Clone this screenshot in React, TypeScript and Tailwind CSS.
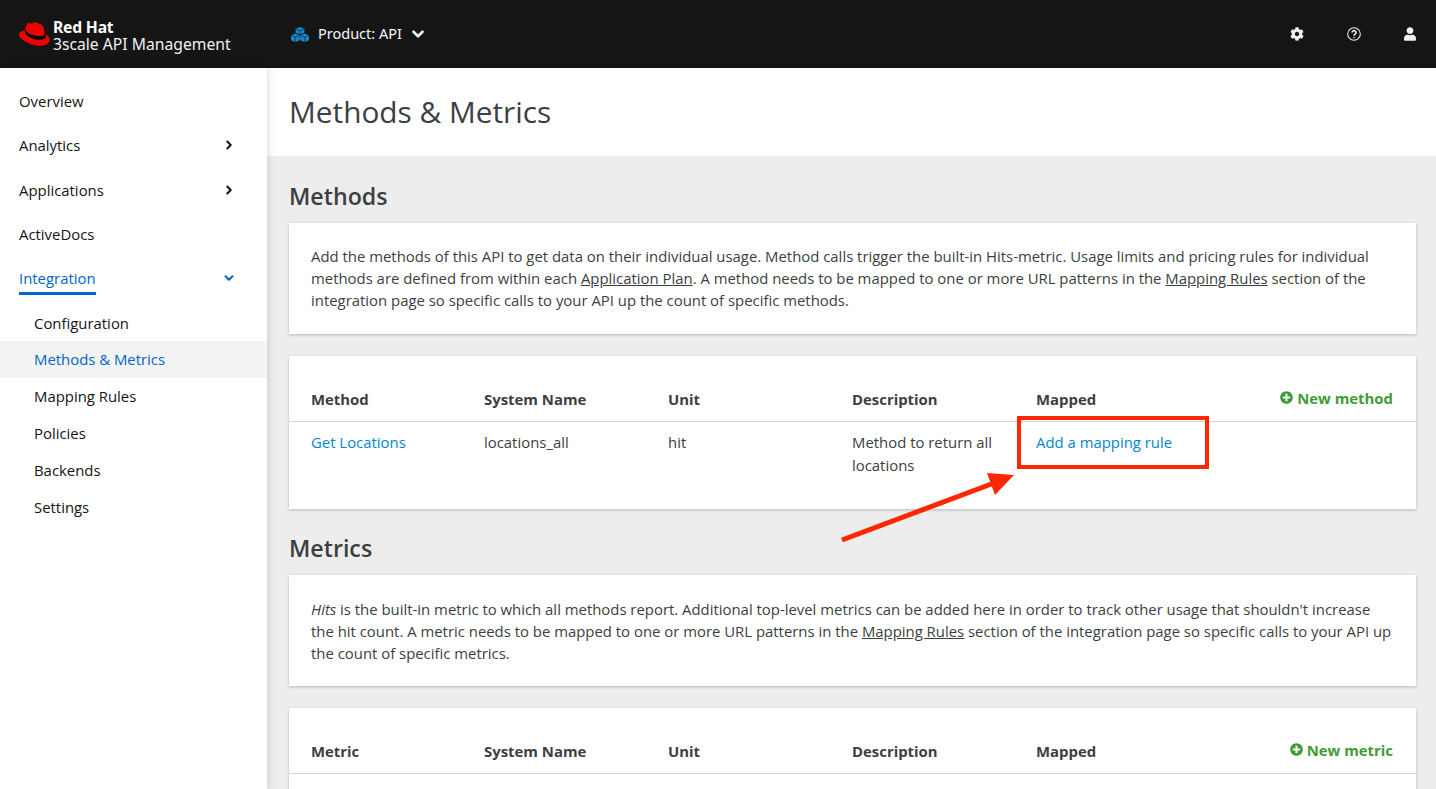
import React from "react";
import { ChevronRight, ChevronDown } from "lucide-react";

const Gear = () => (
  <svg viewBox="0 0 512 512" className="w-[14px] h-[14px]" fill="#f0f0f0">
    <path d="M487.4 315.7l-42.6-24.6c4.3-23.2 4.3-47 0-70.2l42.6-24.6c4.9-2.8 7.1-8.6 5.5-14-11.1-35.6-30-67.8-54.7-94.6-3.8-4.1-10-5.1-14.8-2.3L380.8 110c-17.9-15.4-38.5-27.3-60.8-35.1V25.8c0-5.6-3.9-10.5-9.4-11.7-36.7-8.2-74.3-7.8-109.2 0-5.5 1.2-9.4 6.1-9.4 11.7V75c-22.2 7.9-42.8 19.8-60.8 35.1L88.7 85.5c-4.9-2.8-11-1.9-14.8 2.3-24.7 26.7-43.6 58.9-54.7 94.6-1.7 5.4.6 11.2 5.5 14L67.3 221c-4.3 23.2-4.3 47 0 70.2l-42.6 24.6c-4.9 2.8-7.1 8.6-5.5 14 11.1 35.6 30 67.8 54.7 94.6 3.8 4.1 10 5.1 14.8 2.3l42.6-24.6c17.9 15.4 38.5 27.3 60.8 35.1v49.2c0 5.6 3.9 10.5 9.4 11.7 36.7 8.2 74.3 7.8 109.2 0 5.5-1.2 9.4-6.1 9.4-11.7v-49.2c22.2-7.9 42.8-19.8 60.8-35.1l42.6 24.6c4.9 2.8 11 1.9 14.8-2.3 24.7-26.7 43.6-58.9 54.7-94.6 1.5-5.5-.7-11.3-5.6-14.1zM256 336c-44.1 0-80-35.9-80-80s35.9-80 80-80 80 35.9 80 80-35.9 80-80 80z" />
  </svg>
);

const Help = () => (
  <svg viewBox="0 0 24 24" className="w-[14px] h-[14px]" fill="none" stroke="#f0f0f0" strokeWidth="1.800">
    <circle cx="12" cy="12" r="10.8" />
    <path d="M8.800 9.400a3.300 3.300 0 1 1 5 2.900c-1.200.7-1.800 1.300-1.800 2.700" strokeWidth="2.800" />
    <circle cx="12" cy="18" r="1.400" fill="#f0f0f0" stroke="none" />
  </svg>
);

const User = () => (
  <svg viewBox="0 0 448 512" className="w-[12px] h-[14px]" fill="#f0f0f0">
    <path d="M224 256c70.700 0 128-57.300 128-128S294.700 0 224 0 96 57.300 96 128s57.300 128 128 128zm89.600 32h-16.700c-22.200 10.200-46.900 16-72.900 16s-50.600-5.800-72.900-16h-16.700C60.200 288 0 348.200 0 422.400V464c0 26.500 21.500 48 48 48h352c26.500 0 48-21.500 48-48v-41.600c0-74.200-60.200-134.400-134.400-134.400z" />
  </svg>
);

const Hat = () => (
  <svg viewBox="0 0 33 25" className="w-[31px] h-[24px]">
    <path d="M22 15c2.300 0 5.500-.5 5.500-3.100 0-.2 0-.4-.1-.6l-1.400-6C25.700 4 25.400 3.400 23.100 2.200 21.300 1.300 17.400 0 16.300 0c-1.100 0-1.400 1.400-2.600 1.400C12.500 1.400 11.600.4 10.500.4S8.700 1.100 8.100 2.600c0 0-1.500 4.400-1.700 5-.1.200-.1.300-.1.500C6.300 9.900 12.700 15 22 15z" fill="#ee0000" />
    <path d="M28.300 12.800c.3 1.500.3 1.600.3 1.800 0 2.500-2.800 3.900-6.500 3.900-8.400 0-15.700-4.900-15.700-8.200 0-.5.100-.9.300-1.300C3.700 9.200 0 9.700 0 13c0 5.400 12.800 12 22.900 12 7.800 0 9.700-3.500 9.700-6.300 0-2.200-1.900-4.600-4.300-5.900z" fill="#ee0000" />
    <path d="M28.300 12.800c.3 1.500.3 1.600.3 1.800 0 2.500-2.800 3.900-6.500 3.900-8.400 0-15.700-4.900-15.700-8.200 0-.5.100-.9.300-1.300l.7-1.700c-.1.200-.1.300-.1.500C7 10.600 13 15 22 15c2.300 0 5.500-.5 5.500-3.100 0-.2 0-.4-.1-.6z" fill="#000" />
  </svg>
);

const Cubes = () => (
  <svg viewBox="0 0 18 15" className="w-[18px] h-[15px]" fill="#1a86cf">
    <path d="M9 0l4.400 1.800v4L9 7.600 4.600 5.800v-4z" />
    <path d="M4.400 6.600l4.400 1.800v4.800L4.400 15 0 13.200V8.400z" />
    <path d="M13.600 6.600L18 8.400v4.800L13.600 15l-4.400-1.800V8.400z" />
    <path d="M4.900 2L9 3.700 13.100 2M9 3.700V7.400M.3 8.600l4.100 1.700 4.100-1.700M9.500 8.600l4.100 1.700 4.100-1.700M4.400 10.300V15M13.600 10.300V15" fill="none" stroke="#151515" strokeWidth=".6" />
  </svg>
);

const Plus = () => (
  <svg viewBox="0 0 512 512" className="w-[13px] h-[13px]" fill="#3f9c35">
    <path d="M256 8C119 8 8 119 8 256s111 248 248 248 248-111 248-248S393 8 256 8zm144 276c0 6.600-5.400 12-12 12h-92v92c0 6.600-5.400 12-12 12h-56c-6.600 0-12-5.400-12-12v-92h-92c-6.600 0-12-5.400-12-12v-56c0-6.600 5.400-12 12-12h92v-92c0-6.600 5.400-12 12-12h56c6.600 0 12 5.400 12 12v92h92c6.600 0 12 5.400 12 12z" />
  </svg>
);

const NavTop = ({ label, chevron }: { label: string; chevron?: boolean }) => (
  <div className="h-[44.300px] flex items-center justify-between pl-[19px] pr-[31px] text-[14.900px] text-[#151515]">
    <span>{label}</span>
    {chevron && <ChevronRight size={14} strokeWidth={3.500} color="#151515" />}
  </div>
);

const NavSub = ({ label, active, flush }: { label: string; active?: boolean; flush?: boolean }) => (
  <div className={`h-[37px] flex items-center pl-[34px] text-[14.900px] ${flush ? "" : "pb-[1px]"} ${active ? "bg-[#f3f3f3] text-[#06c]" : "text-[#151515]"}`}>
    {label}
  </div>
);

const Card = ({ children, top }: { children: React.ReactNode; top: string }) => (
  <div className={`bg-white mr-[20px] shadow-[0_1px_3px_rgba(0,0,0,0.22)] px-[22px] h-[111px] text-[14.900px] leading-[22px] text-[#3c3f42] ${top}`}>
    {children}
  </div>
);

const U = ({ children }: { children: React.ReactNode }) => <span className="underline">{children}</span>;

const Heading = ({ children, cls }: { children: React.ReactNode; cls: string }) => (
  <h2 className={`text-[23.200px] leading-[28px] font-semibold text-[#3c3f42] ${cls}`}>{children}</h2>
);

const TableHead = ({ first, action }: { first: string; action: string }) => (
  <div className="flex items-center h-[66px] pt-[21px] border-b border-[#d2d2d2] pl-[22px] pr-[23px] text-[14.900px] font-bold text-[#3c3f42]">
    <div className="w-[173px]">{first}</div>
    <div className="w-[184px]">System Name</div>
    <div className="w-[184px]">Unit</div>
    <div className="w-[184px]">Description</div>
    <div className="flex-1">Mapped</div>
    <div className="flex items-center gap-[4px] pb-[2px] text-[#3f9c35]"><Plus />{action}</div>
  </div>
);

export default function App() {
  return (
    <div className="w-[1436px] h-[789px] overflow-hidden flex flex-col font-['Open_Sans',sans-serif] bg-[#ededed] relative">
      <header className="h-[68px] shrink-0 bg-[#151515] flex items-center text-[#f0f0f0]">
        <div className="w-[291px] pl-[19px] flex items-center shrink-0">
          <Hat />
          <div className="ml-[3px] font-['Noto_Sans',sans-serif] text-[15.700px] leading-[17px] pt-[3px]">
            <div className="font-bold text-white tracking-[-0.2px]">Red Hat</div>
            <div className="text-[#f0f0f0]">3scale API Management</div>
          </div>
        </div>
        <Cubes />
        <span className="ml-[9px] font-['Noto_Sans',sans-serif] text-[14.500px] text-[#f5f5f5]">Product: API</span>
        <ChevronDown size={18} strokeWidth={3.500} className="ml-[7px]" />
        <div className="ml-auto flex items-center pr-[20px]">
          <Gear />
          <div className="ml-[43px]"><Help /></div>
          <div className="ml-[43px]"><User /></div>
        </div>
      </header>
      <div className="flex flex-1 min-h-0">
        <aside className="w-[267px] shrink-0 bg-white shadow-[2px_0_6px_rgba(0,0,0,0.12)] z-10 pt-[11px]">
          <NavTop label="Overview" />
          <NavTop label="Analytics" chevron />
          <NavTop label="Applications" chevron />
          <NavTop label="ActiveDocs" />
          <div className="h-[44.300px] flex items-center justify-between pl-[19px] pr-[31px] text-[14.900px] text-[#06c] relative">
            <span className="relative">Integration<span className="absolute left-0 right-0 top-[25px] h-[3px] bg-[#06c]" /></span>
            <ChevronDown size={14} strokeWidth={3.500} color="#06c" />
          </div>
          <div className="pt-[4px]">
            <NavSub label="Configuration" flush />
            <NavSub label="Methods & Metrics" active />
            <NavSub label="Mapping Rules" />
            <NavSub label="Policies" />
            <NavSub label="Backends" />
            <NavSub label="Settings" />
          </div>
        </aside>
        <main className="flex-1 min-w-0">
          <div className="h-[88px] bg-white pl-[22px] flex items-center text-[29.800px] text-[#3c3f42]">Methods &amp; Metrics</div>
          <div className="pl-[22px]">
            <Heading cls="pt-[26px] mb-[13px]">Methods</Heading>
            <Card top="pt-[22px]">
              Add the methods of this API to get data on their individual usage. Method calls trigger the built-in Hits-metric. Usage limits and pricing rules for individual methods are defined from within each <U>Application Plan</U>. A method needs to be mapped to one or more URL patterns in the <U>Mapping Rules</U> section of the integration page so specific calls to your API up the count of specific methods.
            </Card>
            <div className="bg-white mr-[20px] mt-[22px] h-[153px] shadow-[0_1px_3px_rgba(0,0,0,0.22)]">
              <TableHead first="Method" action="New method" />
              <div className="flex pl-[22px] pt-[9px] text-[14.900px] leading-[22px] text-[#3c3f42]">
                <div className="w-[173px] text-[#0088ce]">Get Locations</div>
                <div className="w-[184px]">locations_all</div>
                <div className="w-[184px]">hit</div>
                <div className="w-[184px] pr-[20px]">
                  <div>Method to return all</div>
                  <div className="mt-[1px]">locations</div>
                </div>
                <div className="text-[#0088ce]">Add a mapping rule</div>
              </div>
            </div>
            <Heading cls="pt-[25px] mb-[13px]">Metrics</Heading>
            <Card top="pt-[23px]">
              <em>Hits</em> is the built-in metric to which all methods report. Additional top-level metrics can be added here in order to track other usage that shouldn't increase the hit count. A metric needs to be mapped to one or more URL patterns in the <U>Mapping Rules</U> section of the integration page so specific calls to your API up the count of specific metrics.
            </Card>
            <div className="bg-white mr-[20px] mt-[22px] h-[153px] shadow-[0_1px_3px_rgba(0,0,0,0.22)]">
              <TableHead first="Metric" action="New metric" />
            </div>
          </div>
        </main>
      </div>
      <div className="absolute left-[1017px] top-[416px] w-[192px] h-[53px] border-[4px] border-[#ff2600] z-20" />
      <svg className="absolute left-[830px] top-[465px] z-20" width="200" height="85" viewBox="830 465 200 85">
        <path d="M842 540L994 483" stroke="#ff2600" strokeWidth="5" fill="none" />
        <path d="M1014 475L987 473L995 495Z" fill="#ff2600" />
      </svg>
    </div>
  );
}
